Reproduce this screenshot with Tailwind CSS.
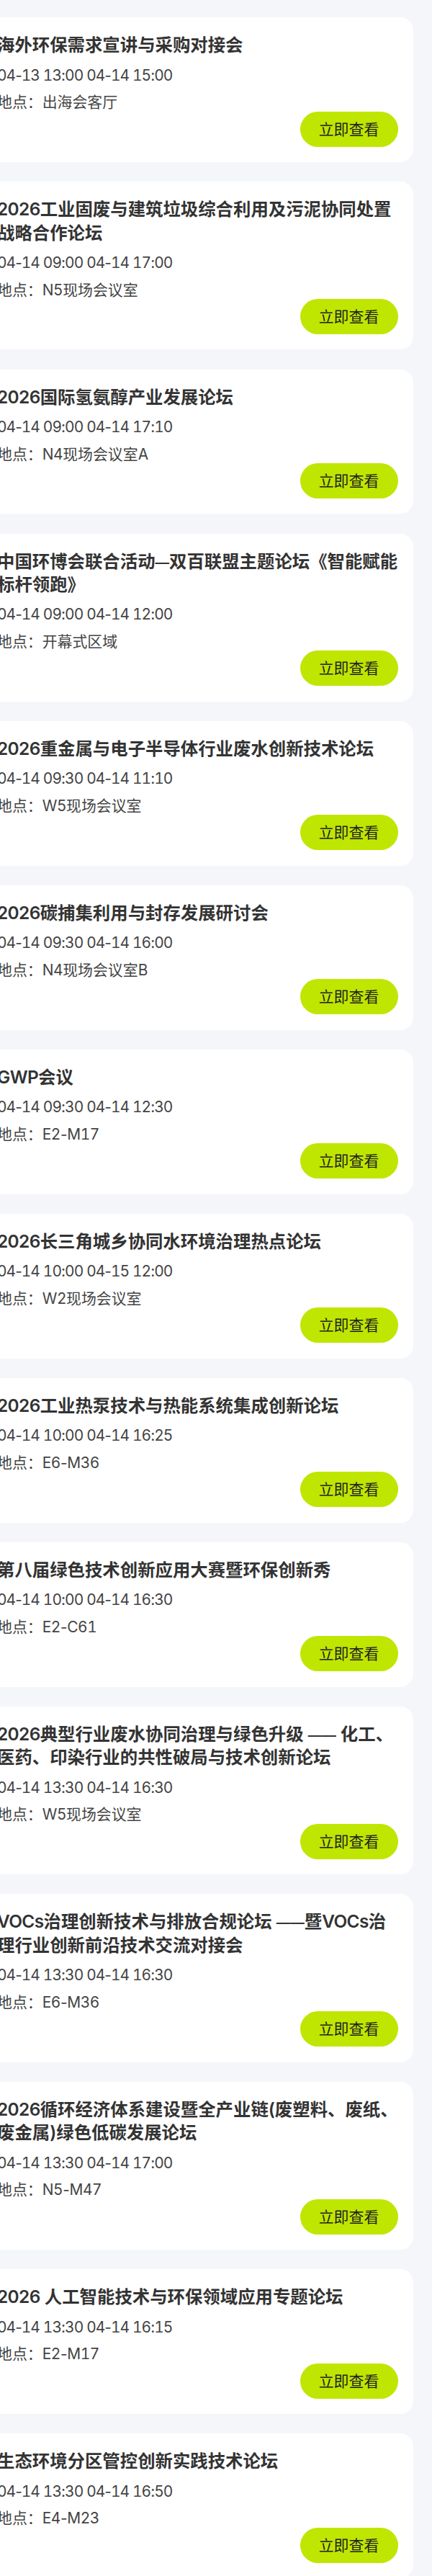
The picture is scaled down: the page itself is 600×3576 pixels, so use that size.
<!DOCTYPE html>
<html lang="zh-CN">

<head>
    <meta charset="UTF-8">
    <meta name="viewport" content="width=device-width, initial-scale=1.0">
    <title>会议活动</title>
    <script src="https://cdn.jsdelivr.net/npm/@tailwindcss/browser@4"></script>
</head>

<body class="bg-[#f4f6fa] overflow-x-hidden font-['Inter','Noto_Sans_CJK_SC',sans-serif]">
    <div id="list" class="flex flex-col gap-[27.3px] h-[3576px] pt-[24.2px] overflow-hidden"></div>
</body>

</html>

<script>
    const events = [
        ["海外环保需求宣讲与采购对接会", "04-13 13:00 04-14 15:00", "出海会客厅"],
        ["2026工业固废与建筑垃圾综合利用及污泥协同处置<br>战略合作论坛", "04-14 09:00 04-14 17:00", "N5现场会议室"],
        ["2026国际氢氨醇产业发展论坛", "04-14 09:00 04-14 17:10", "N4现场会议室A"],
        ["中国环博会联合活动—双百联盟主题论坛《智能赋能<br>标杆领跑》", "04-14 09:00 04-14 12:00", "开幕式区域"],
        ["2026重金属与电子半导体行业废水创新技术论坛", "04-14 09:30 04-14 11:10", "W5现场会议室"],
        ["2026碳捕集利用与封存发展研讨会", "04-14 09:30 04-14 16:00", "N4现场会议室B"],
        ["GWP会议", "04-14 09:30 04-14 12:30", "E2-M17"],
        ["2026长三角城乡协同水环境治理热点论坛", "04-14 10:00 04-15 12:00", "W2现场会议室"],
        ["2026工业热泵技术与热能系统集成创新论坛", "04-14 10:00 04-14 16:25", "E6-M36"],
        ["第八届绿色技术创新应用大赛暨环保创新秀", "04-14 10:00 04-14 16:30", "E2-C61"],
        ["2026典型行业废水协同治理与绿色升级 —— 化工、<br>医药、印染行业的共性破局与技术创新论坛", "04-14 13:30 04-14 16:30", "W5现场会议室"],
        ["VOCs治理创新技术与排放合规论坛 ——暨VOCs治<br>理行业创新前沿技术交流对接会", "04-14 13:30 04-14 16:30", "E6-M36"],
        ["2026循环经济体系建设暨全产业链(废塑料、废纸、<br>废金属)绿色低碳发展论坛", "04-14 13:30 04-14 17:00", "N5-M47"],
        ["2026 人工智能技术与环保领域应用专题论坛", "04-14 13:30 04-14 16:15", "E2-M17"],
        ["生态环境分区管控创新实践技术论坛", "04-14 13:30 04-14 16:50", "E4-M23"],
    ]

    // latin runs are set a little tighter than the chinese text, dashes a little shorter
    const formatTitle = (text) => text
        .replace(/[A-Z0-9][A-Za-z0-9]*/g, '<span class="tracking-[-0.6px]">$&</span>')
        .replace(/—+/g, '<span class="text-[19.5px] leading-none">$&</span>')

    // only the digits are tabular, hyphens and colons keep their own width
    const formatTime = (text) => text.replace(/\d+/g, '<span class="tabular-nums">$&</span>')
    const formatPlace = (text) => text.replace(/[A-Z0-9-]+/g, (run) => `<span class="tracking-[-0.4px]">${formatTime(run)}</span>`)

    document.getElementById("list").innerHTML = events.map(([title, time, place]) => `
        <div class="shrink-0 -ml-7 mr-[26px] pl-6 pr-[21.5px] pt-[22px] pb-[21.3px] bg-white rounded-[18px] whitespace-nowrap text-[#333]">
            <h3 class="text-[24.4px] leading-[32.4px] font-semibold">${title.split("<br>").map(formatTitle).join("<br>")}</h3>
            <p class="mt-[9px] h-[33px] text-[20.9px] leading-[33px] tracking-[-0.97px] text-[#444]">${formatTime(time)}</p>
            <p class="mt-[4.5px] h-[33px] text-[20.9px] leading-[33px] text-[#444]">地点：${formatPlace(place)}</p>
            <div class="flex justify-end -mt-[3.5px]">
                <button class="w-[136px] h-[49px] rounded-full bg-[#bfe600] text-[20.9px] leading-[49px] text-[#222]">立即查看</button>
            </div>
        </div>`).join("")
</script>
